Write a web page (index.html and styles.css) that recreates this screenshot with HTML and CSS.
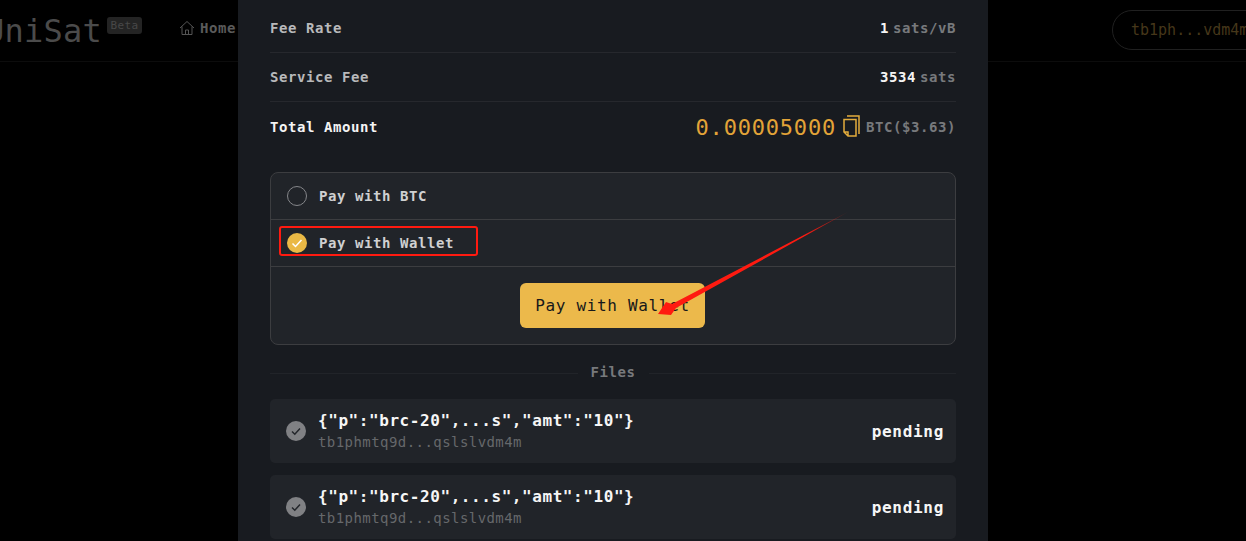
FILE: index.html
```html
<!DOCTYPE html>
<html lang="en">
<head>
<meta charset="utf-8">
<title>UniSat</title>
<link rel="stylesheet" href="styles.css">
</head>
<body>
<header class="topbar">
  <div class="logo">UniSat</div>
  <span class="beta">Beta</span>
  <nav class="nav">
    <svg class="home-icon" viewBox="0 0 16 16" width="16" height="16"><path d="M1 8 8 1.500 15 8M3 6.500V14.500H13V6.500M6.500 14.500V10H9.500V14.500" fill="none" stroke="#555" stroke-width="1"/></svg>
    <span class="nav-label">Home</span>
  </nav>
  <div class="wallet">tb1ph...vdm4m</div>
</header>

<main class="modal">
  <div class="row"><span class="label">Fee Rate</span><span class="value"><b>1</b> sats/vB</span></div>
  <div class="row"><span class="label">Service Fee</span><span class="value"><b>3534</b> sats</span></div>
  <div class="row row-total">
    <span class="label label-total">Total Amount</span>
    <span class="total">
      <span class="amount">0.00005000</span>
      <svg class="copy" viewBox="0 0 17 22" width="17" height="22"><path d="M4 1H16V19M1 4.500H13V21H5L1 17ZM1 17H5V21" fill="none" stroke="#e3ad3c" stroke-width="1.500"/></svg>
      <span class="value">BTC($3.63)</span>
    </span>
  </div>

  <section class="pay-panel">
    <div class="option">
      <span class="radio"></span>
      <span class="option-label">Pay with BTC</span>
    </div>
    <div class="option">
      <span class="radio radio-on"><svg viewBox="0 0 20 20" width="20" height="20"><path d="M5.500 10.500 8.500 13.500 14.500 7" fill="none" stroke="#fff" stroke-width="1.500"/></svg></span>
      <span class="option-label">Pay with Wallet</span>
    </div>
    <div class="pay-action"><button class="pay-button">Pay with Wallet</button></div>
  </section>

  <div class="divider"><span class="divider-label">Files</span></div>

  <div class="file">
    <span class="done"><svg viewBox="0 0 20 20" width="20" height="20"><path d="M6 10.500 8.800 13.200 14 7.500" fill="none" stroke="#23262b" stroke-width="1.500"/></svg></span>
    <div class="file-text">
      <div class="file-title">{"p":"brc-20",...s","amt":"10"}</div>
      <div class="file-addr">tb1phmtq9d...qslslvdm4m</div>
    </div>
    <span class="status">pending</span>
  </div>
  <div class="file">
    <span class="done"><svg viewBox="0 0 20 20" width="20" height="20"><path d="M6 10.500 8.800 13.200 14 7.500" fill="none" stroke="#23262b" stroke-width="1.500"/></svg></span>
    <div class="file-text">
      <div class="file-title">{"p":"brc-20",...s","amt":"10"}</div>
      <div class="file-addr">tb1phmtq9d...qslslvdm4m</div>
    </div>
    <span class="status">pending</span>
  </div>
</main>

<div class="red-box"></div>
<svg class="arrow" viewBox="0 0 1246 541" width="1246" height="541">
  <defs>
    <linearGradient id="fade" gradientUnits="userSpaceOnUse" x1="848" y1="212" x2="805" y2="235">
      <stop offset="0" stop-color="#ff1a10" stop-opacity="0.25"/>
      <stop offset="1" stop-color="#ff1a10"/>
    </linearGradient>
  </defs>
  <path d="M848 212 672 304 666 302 658 314 671 315 676 308Z" fill="url(#fade)"/>
</svg>
</body>
</html>
```

FILE: styles.css
```css
* { box-sizing: border-box; }

html, body {
  margin: 0;
  height: 541px;
  overflow: hidden;
  background: #000;
}

body {
  position: relative;
  font-family: "DejaVu Sans Mono", "Liberation Mono", monospace;
  font-size: 14px;
  letter-spacing: 0.57px;
  color: #c9cacc;
}

/* dimmed page behind the modal */
.topbar {
  display: flex;
  align-items: flex-start;
  height: 62px;
  margin-left: -15px;
  border-bottom: 1px solid #0c0c0c;
}

.logo {
  margin-top: 12px;
  font-size: 32px;
  line-height: 38px;
  letter-spacing: 0.25px;
  color: #4b4b4b;
}

.beta {
  margin: 17px 0 0 5px;
  width: 35px;
  height: 17px;
  border-radius: 3px;
  background: #242424;
  color: #484848;
  font-size: 11px;
  line-height: 18px;
  letter-spacing: 0.4px;
  text-align: center;
}

.nav {
  display: flex;
  align-items: center;
  gap: 5px;
  margin: 20px 0 0 37px;
  color: #5a5a5a;
  font-weight: 700;
}

.wallet {
  position: absolute;
  top: 10px;
  left: 1112px;
  width: 200px;
  height: 40px;
  padding-left: 18px;
  border: 1px solid #202020;
  border-radius: 20px;
  color: #46371a;
  font-size: 15px;
  line-height: 38px;
  letter-spacing: 0;
}

/* modal */
.modal {
  position: absolute;
  top: 0;
  left: 238px;
  width: 750px;
  height: 541px;
  padding: 4px 32px 0;
  overflow: hidden;
  background: #181b20;
}

.row {
  display: flex;
  justify-content: space-between;
  align-items: center;
  height: 49px;
  border-bottom: 1px solid #26282d;
}

.row-total {
  height: 50px;
  border-bottom: 0;
}

.label {
  font-weight: 700;
  color: #b8b9bb;
}

.label-total { color: #f4f4f4; }

.value {
  font-weight: 700;
  word-spacing: -5px;
  color: #77797c;
}

.value b { color: #f4f4f4; }

.total {
  display: flex;
  align-items: center;
  gap: 6px;
}

.amount {
  margin-right: 1px;
  font-size: 22px;
  letter-spacing: 0.8px;
  color: #e3a438;
}

.copy { margin-bottom: 2px; }

.pay-panel {
  margin-top: 20px;
  border: 1px solid #3c3d40;
  border-radius: 8px;
  background: #212429;
}

.option {
  display: flex;
  align-items: center;
  gap: 12px;
  height: 47px;
  padding: 0 16px;
  border-bottom: 1px solid #3c3d40;
}

.option-label {
  font-weight: 700;
  color: #cfd0d1;
}

.radio {
  width: 20px;
  height: 20px;
  border: 1px solid #85868a;
  border-radius: 50%;
}

.radio-on {
  display: block;
  border: 0;
  background: #eab945;
}

.radio svg, .done svg { display: block; }

.pay-action {
  display: flex;
  justify-content: center;
  height: 77px;
  padding: 16px 1px 0 0;
}

.pay-button {
  width: 185px;
  height: 45px;
  border: 0;
  border-radius: 6px;
  background: #ecb94b;
  color: #17181a;
  font-family: inherit;
  font-size: 16px;
  letter-spacing: 0.67px;
}

.divider {
  display: flex;
  align-items: center;
  gap: 13px;
  height: 54px;
  padding-top: 2px;
  color: #77797c;
  font-weight: 700;
}

.divider-label { margin-top: -2px; }

.divider::before, .divider::after {
  content: "";
  flex: 1;
  border-top: 1px solid #212429;
}

.file {
  display: flex;
  align-items: center;
  gap: 12px;
  height: 64px;
  margin-bottom: 12px;
  padding: 0 12px 0 16px;
  border-radius: 5px;
  background: #212429;
}

.done {
  width: 20px;
  height: 20px;
  border-radius: 50%;
  background: #808184;
}

.file-text { flex: 1; }

.file-title {
  font-size: 16px;
  font-weight: 700;
  line-height: 20px;
  letter-spacing: 0.57px;
  color: #f6f6f6;
}

.file-addr {
  margin-top: 2px;
  line-height: 18px;
  letter-spacing: 0.44px;
  color: #66686b;
}

.status {
  font-size: 16px;
  font-weight: 700;
  letter-spacing: 0.7px;
  color: #f6f6f6;
}

/* screenshot annotations */
.red-box {
  position: absolute;
  top: 226px;
  left: 279px;
  width: 199px;
  height: 30px;
  border: 2px solid #ff1a10;
  border-radius: 3px;
}

.arrow {
  position: absolute;
  top: 0;
  left: 0;
}
```
